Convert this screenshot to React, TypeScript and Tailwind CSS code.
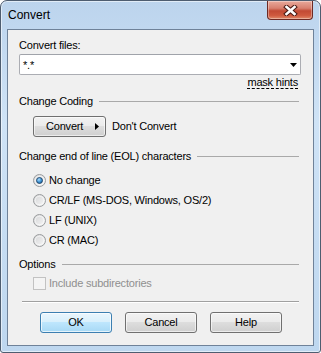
import React from 'react';

const font = "font-['Liberation_Sans',Arial,sans-serif]";

function Radio({ checked, id }: { checked?: boolean; id: string }) {
  return (
    <svg width="13" height="13" viewBox="0 0 13 13" className="shrink-0">
      <defs>
        <linearGradient id={`rf-${id}`} x1="0" y1="0" x2="1" y2="1">
          <stop offset="0" stopColor="#d3d4d5" />
          <stop offset="1" stopColor="#f8f8f8" />
        </linearGradient>
        <radialGradient id={`rd-${id}`} cx="0.4" cy="0.35" r="0.7">
          <stop offset="0" stopColor="#a8dcff" />
          <stop offset="0.6" stopColor="#3a8fd0" />
          <stop offset="1" stopColor="#1b5a93" />
        </radialGradient>
      </defs>
      <circle cx="6.5" cy="6.5" r="6" fill={`url(#rf-${id})`} stroke="#9a9c9e" strokeWidth="1" />
      <circle cx="6.5" cy="6.5" r="4.3" fill="none" stroke="#ffffff" strokeOpacity="0.6" strokeWidth="1" />
      {checked && (
        <circle cx="6.5" cy="6.5" r="3" fill={`url(#rd-${id})`} stroke="#1f3f5f" strokeWidth="0.8" />
      )}
    </svg>
  );
}

function GroupHeader({ label }: { label: string }) {
  return (
    <div className="flex h-[14px] items-center">
      <span className="leading-[14px]">{label}</span>
      <div className="ml-[6px] mr-[2px] h-px flex-1 bg-[#a9a9a9]" />
    </div>
  );
}

function Button({ children, primary }: { children: React.ReactNode; primary?: boolean }) {
  return (
    <div
      className={`flex h-[21px] w-[72px] items-center justify-center rounded-[3px] border ${
        primary
          ? 'border-[#3c7fb1] bg-[linear-gradient(180deg,#eaf6fd_0%,#d9f0fc_45%,#bee6fd_50%,#a7d9f5_100%)] shadow-[inset_0_0_0_1px_rgba(255,255,255,0.7)]'
          : 'border-[#707070] bg-[linear-gradient(180deg,#f2f2f2_0%,#ebebeb_45%,#dddddd_50%,#cfcfcf_100%)] shadow-[inset_0_0_0_1px_rgba(255,255,255,0.6)]'
      }`}
    >
      {children}
    </div>
  );
}

export default function App() {
  return (
    <div className={`h-[353px] w-[321px] bg-white text-[11px] tracking-[-0.2px] text-black ${font}`}>
      <div className="relative flex h-[353px] w-[321px] flex-col rounded-t-[7px] rounded-b-[3px] border border-[#4e5d70] bg-[linear-gradient(180deg,#bcd4ed_0%,#cfe3f6_35%,#c5dcf2_70%,#bed7ef_100%)] shadow-[inset_0_0_0_1px_rgba(255,255,255,0.55)]">
        {/* Title bar */}
        <div className="flex h-[28px] items-center pl-[7px]">
          <span className="text-[12px] leading-[14px] tracking-normal text-black">Convert</span>
        </div>
        <div className="absolute left-[266px] top-0 flex h-[19px] w-[46px] items-center justify-center rounded-b-[4px] border border-t-0 border-[#6d2a24] bg-[linear-gradient(180deg,#e9a99b_0%,#d8806f_40%,#c24a34_55%,#cf5a3f_80%,#e08a6a_100%)] shadow-[inset_0_0_0_1px_rgba(255,255,255,0.35)]">
          <svg width="15" height="11" viewBox="0 0 15 11">
            <path d="M3.5 2 L11.5 9 M11.5 2 L3.5 9" stroke="#4a1a14" strokeWidth="4.6" strokeLinecap="square" />
            <path d="M3.5 2 L11.5 9 M11.5 2 L3.5 9" stroke="#ffffff" strokeWidth="2.6" strokeLinecap="square" />
          </svg>
        </div>

        {/* Client area */}
        <div className="mx-[6px] mb-[6px] flex flex-1 flex-col border border-[#6f8299] bg-[#f0f0f0] pl-[11px] pr-[12px]">
          <div className="mt-[8px] flex h-[15px] items-center">Convert files:</div>

          <div className="mt-[1px] flex h-[21px] items-center justify-between rounded-[2px] border border-[#abadb3] border-t-[#a0a3aa] bg-white pl-[3px] pr-[3px]">
            <span className="leading-[12px]">*.*</span>
            <svg width="7" height="4" viewBox="0 0 7 4">
              <path d="M0 0 H7 L3.5 4 Z" fill="#000" />
            </svg>
          </div>

          <div className="flex h-[14px] justify-end">
            <span className="mr-[3px] mt-[1px] border-b border-dashed border-black leading-[12px]">mask hints</span>
          </div>

          <div className="mt-[5px]">
            <GroupHeader label="Change Coding" />
          </div>

          <div className="ml-[14px] mt-[8px] flex items-center">
            <div className="flex h-[21px] w-[73px] items-center rounded-[3px] border border-[#707070] bg-[linear-gradient(180deg,#f2f2f2_0%,#ebebeb_45%,#dddddd_50%,#cfcfcf_100%)] pl-[12px] shadow-[inset_0_0_0_1px_rgba(255,255,255,0.6)]">
              <span>Convert</span>
              <svg width="4" height="7" viewBox="0 0 4 7" className="ml-[12px]">
                <path d="M0 0 L4 3.5 L0 7 Z" fill="#000" />
              </svg>
            </div>
            <span className="ml-[6px]">Don't Convert</span>
          </div>

          <div className="mt-[12px]">
            <GroupHeader label="Change end of line (EOL) characters" />
          </div>

          <div className="ml-[14px] mt-[7px] flex flex-col">
            {[
              ['No change', true],
              ['CR/LF (MS-DOS, Windows, OS/2)', false],
              ['LF (UNIX)', false],
              ['CR (MAC)', false],
            ].map(([label, checked], i) => (
              <div key={i} className="flex h-[20px] items-center">
                <Radio id={`r${i}`} checked={checked as boolean} />
                <span className="ml-[3px]">{label as string}</span>
              </div>
            ))}
          </div>

          <div className="mt-[7px]">
            <GroupHeader label="Options" />
          </div>

          <div className="ml-[14px] mt-[2px] flex h-[20px] items-center">
            <div className="h-[13px] w-[13px] shrink-0 border border-[#c2c2c2] bg-[#f4f4f4]" />
            <span className="ml-[3px] text-[#8f8f8f]">Include subdirectories</span>
          </div>

          <div className="ml-[3px] mr-[2px] mt-[8px] h-px bg-[#a0a0a0]" />
          <div className="ml-[3px] mr-[2px] h-px bg-white" />

          <div className="ml-[21px] mt-[9px] flex gap-[13px]">
            <Button primary>OK</Button>
            <Button>Cancel</Button>
            <Button>Help</Button>
          </div>
        </div>
      </div>
    </div>
  );
}
